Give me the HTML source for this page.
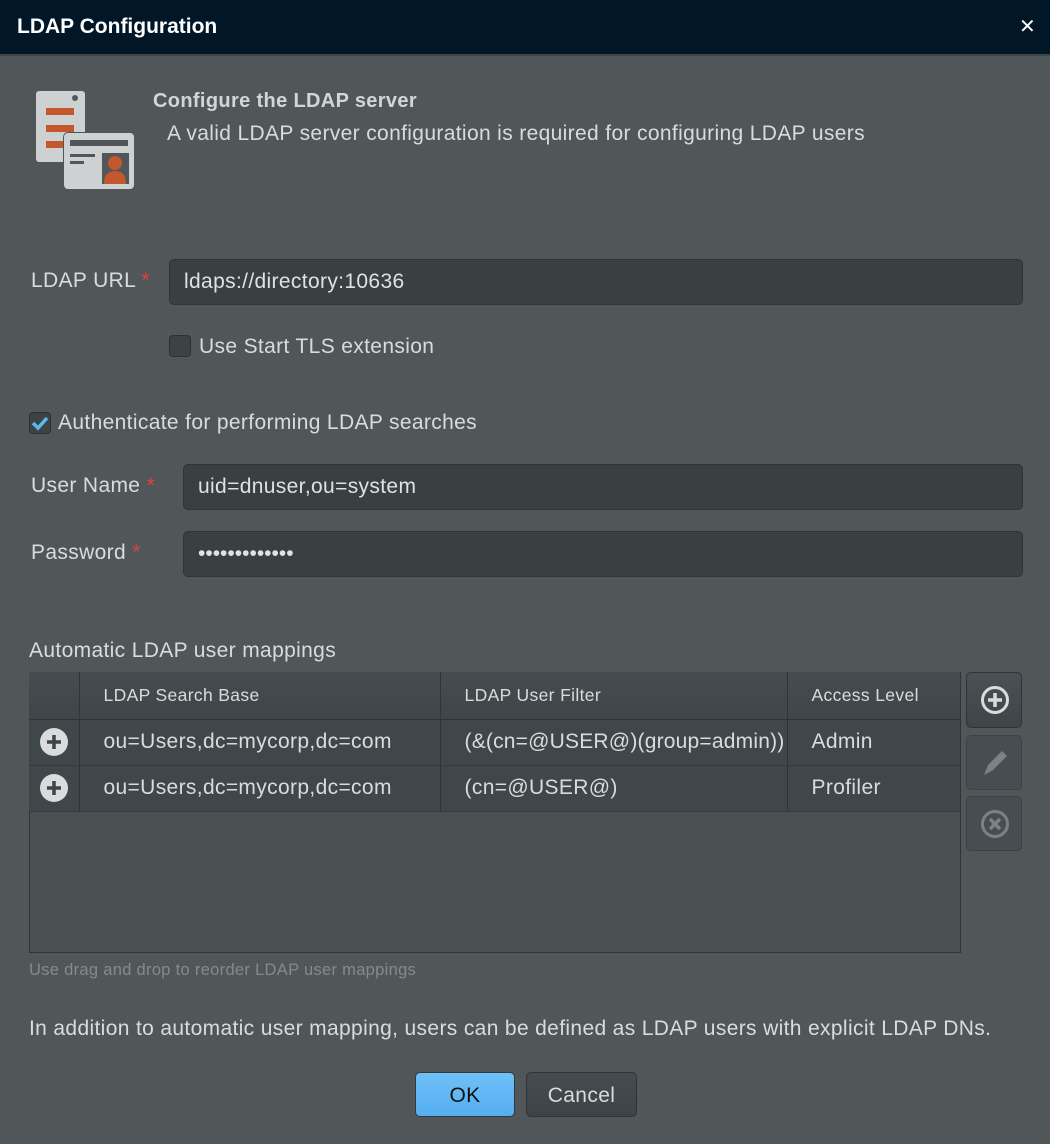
<!DOCTYPE html>
<html><head><style>
*{box-sizing:border-box;margin:0;padding:0}
body{width:1050px;height:1144px;background:#515759;font-family:"Liberation Sans","DejaVu Sans",sans-serif;color:#d8dcdd;position:relative;overflow:hidden;font-size:21px;letter-spacing:0.35px}
.a{position:absolute;white-space:nowrap}
.title{left:0;top:0;width:1050px;height:56px;background:#011627;border-bottom:2px solid #3d4446}
.input{position:absolute;background:#3a3f41;border:1px solid #2f3436;border-radius:5px;height:46px;padding-left:14px;line-height:44px;font-size:21px;color:#dfe2e3}
.star{color:#e0413a}
.cb{position:absolute;width:22px;height:22px;border-radius:4px;background:#3d4244;border:1px solid #2d3133}
table{position:absolute;left:29px;top:672px;width:932px;border-collapse:collapse;font-size:21px;table-layout:fixed}
td{height:46px;border-right:1px solid #2f3436;border-bottom:1px solid #353b3d;padding-left:24px;background:#40474a;white-space:nowrap;overflow:hidden}
th{height:47px;border-right:1px solid #2f3436;border-bottom:1px solid #2f3436;padding-left:24px;text-align:left;font-weight:normal;font-size:17.5px;background:linear-gradient(#464c4f,#3f4548);color:#d8dcdd;white-space:nowrap}
.btn{position:absolute;left:966px;width:56px;border-radius:5px;border:1px solid #3c4244;background:#474d50}
</style></head><body>
<div class="a title"></div>
<div class="a" style="left:17px;top:15px;font-size:21px;font-weight:bold;color:#fff;letter-spacing:0">LDAP Configuration</div>
<div class="a" style="left:1019px;top:14px;font-size:20px;font-weight:bold;color:#fff">✕</div>

<svg class="a" style="left:36px;top:90px" width="100" height="100" viewBox="0 0 100 100">
<rect x="0" y="1" width="49" height="71" rx="3" fill="#cdd1d2"/>
<circle cx="39" cy="8" r="3" fill="#515759"/>
<rect x="10" y="18" width="28" height="7" fill="#c4572d"/>
<rect x="10" y="35" width="28" height="7" fill="#c4572d"/>
<rect x="10" y="51" width="28" height="7" fill="#c4572d"/>
<rect x="27" y="42" width="73" height="59" rx="5" fill="#515759"/>
<rect x="28" y="43" width="70" height="56" rx="4" fill="#cdd1d2"/>
<rect x="34" y="50" width="58" height="6" fill="#515759"/>
<rect x="34" y="64" width="25" height="3" fill="#515759"/>
<rect x="34" y="71" width="14" height="3" fill="#515759"/>
<rect x="66" y="63" width="27" height="31" fill="#515759"/>
<circle cx="79" cy="73" r="7" fill="#c4572d"/>
<path d="M68 94 Q68 81 79 81 Q90 81 90 94Z" fill="#c4572d"/>
</svg>
<div class="a" style="left:153px;top:90px;font-size:20px;font-weight:bold;color:#d2d6d7">Configure the LDAP server</div>
<div class="a" style="left:167px;top:122px">A valid LDAP server configuration is required for configuring LDAP users</div>

<div class="a" style="left:31px;top:269px">LDAP URL <span class="star">*</span></div>
<div class="input" style="left:169px;top:259px;width:854px">ldaps://directory:10636</div>
<div class="cb" style="left:169px;top:335px"></div>
<div class="a" style="left:199px;top:335px">Use Start TLS extension</div>

<div class="cb" style="left:29px;top:412px"></div>
<svg class="a" style="left:31px;top:415px" width="18" height="16"><path d="M2 8 L7 13 L16 3" stroke="#5bb8ef" stroke-width="3.5" fill="none"/></svg>
<div class="a" style="left:58px;top:411px">Authenticate for performing LDAP searches</div>

<div class="a" style="left:31px;top:474px">User Name <span class="star">*</span></div>
<div class="input" style="left:183px;top:464px;width:840px">uid=dnuser,ou=system</div>
<div class="a" style="left:31px;top:541px">Password <span class="star">*</span></div>
<div class="input" style="left:183px;top:531px;width:840px;letter-spacing:0">•••••••••••••</div>

<div class="a" style="left:29px;top:639px">Automatic LDAP user mappings</div>
<div class="a" style="left:29px;top:672px;width:932px;height:281px;background:#4b5153;border:1px solid #2f3436"></div>
<table>
<colgroup><col style="width:50px"><col style="width:361px"><col style="width:347px"><col></colgroup>
<tr><th style="padding:0"></th><th>LDAP Search Base</th><th>LDAP User Filter</th><th>Access Level</th></tr>
<tr><td style="padding:0;text-align:center"><svg width="28" height="28" style="vertical-align:middle"><circle cx="14" cy="14" r="14" fill="#d8dcdd"/><path d="M14 7v14M7 14h14" stroke="#3e4447" stroke-width="3.5"/></svg></td><td>ou=Users,dc=mycorp,dc=com</td><td style="letter-spacing:0.2px">(&amp;(cn=@USER@)(group=admin))</td><td>Admin</td></tr>
<tr><td style="padding:0;text-align:center"><svg width="28" height="28" style="vertical-align:middle"><circle cx="14" cy="14" r="14" fill="#d8dcdd"/><path d="M14 7v14M7 14h14" stroke="#3e4447" stroke-width="3.5"/></svg></td><td>ou=Users,dc=mycorp,dc=com</td><td>(cn=@USER@)</td><td>Profiler</td></tr>
</table>

<div class="btn" style="top:672px;height:56px;background:linear-gradient(#4a5053,#3f4548);border-color:#2f3436"><svg style="position:absolute;left:13px;top:12px" width="30" height="30"><circle cx="15" cy="15" r="12.5" stroke="#d8dcdd" stroke-width="3" fill="none"/><path d="M15 8v14M8 15h14" stroke="#d8dcdd" stroke-width="3.5"/></svg></div>
<div class="btn" style="top:735px;height:55px"><svg style="position:absolute;left:13px;top:11px" width="30" height="32"><path d="M4 28 L8 18 L22 4 L27 9 L13 23Z" fill="#7c8284"/></svg></div>
<div class="btn" style="top:796px;height:55px"><svg style="position:absolute;left:13px;top:12px" width="30" height="30"><circle cx="15" cy="15" r="12.5" stroke="#7c8284" stroke-width="3" fill="none"/><path d="M10 10l10 10M20 10l-10 10" stroke="#7c8284" stroke-width="3.5"/></svg></div>

<div class="a" style="left:29px;top:961px;font-size:16.5px;color:#858b8d;letter-spacing:0.3px">Use drag and drop to reorder LDAP user mappings</div>
<div class="a" style="left:29px;top:1017px">In addition to automatic user mapping, users can be defined as LDAP users with explicit LDAP DNs.</div>

<div class="a" style="left:415px;top:1072px;width:100px;height:45px;border-radius:5px;background:linear-gradient(#6fc0f7,#56aef0);border:1px solid #34393b;color:#111;text-align:center;line-height:45px">OK</div>
<div class="a" style="left:526px;top:1072px;width:111px;height:45px;border-radius:5px;background:linear-gradient(#464c4f,#3d4346);border:1px solid #2f3436;text-align:center;line-height:45px">Cancel</div>
</body></html>
